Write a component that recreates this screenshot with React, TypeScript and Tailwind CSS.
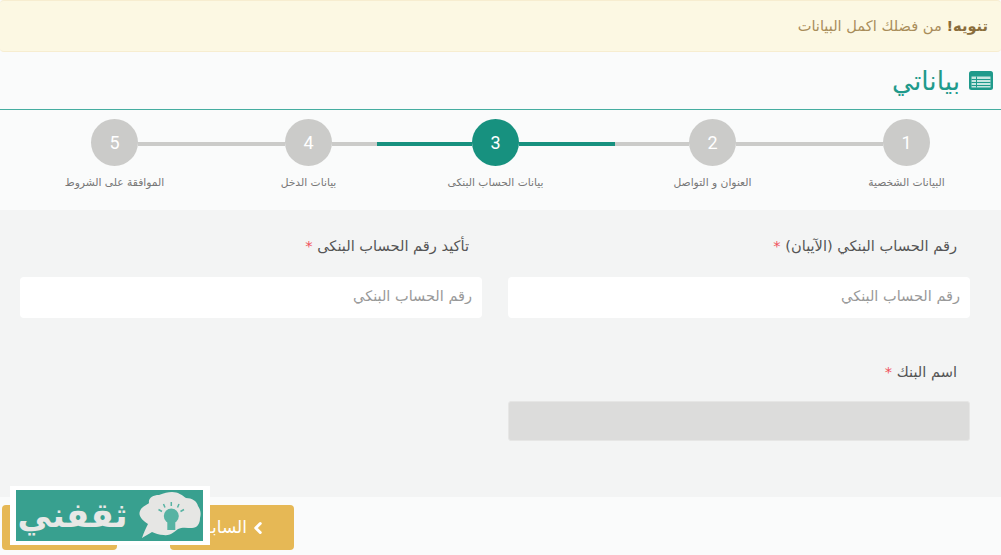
import { ChevronLeft } from "lucide-react";

const arabic = "font-['DejaVu_Sans','Noto_Sans',sans-serif]";

function Step({ num, label, active }: { num: number; label: string; active?: boolean }) {
  return (
    <div className="w-[47px] flex flex-col items-center shrink-0">
      <div className={`w-[47px] h-[47px] rounded-full flex items-center justify-center text-white text-[18px] font-['Roboto',sans-serif] ${active ? "bg-[#17917f]" : "bg-[#cbcbc9]"}`}>
        {num}
      </div>
      <span className="mt-[9px] text-[10.7px] leading-[16px] text-[#777] whitespace-nowrap">{label}</span>
    </div>
  );
}

function Line({ w, active }: { w: string; active?: boolean }) {
  return <div className={`${w} h-1 mt-[23px] shrink-0 ${active ? "bg-[#17917f]" : "bg-[#cbcbc9]"}`} />;
}

function Field({ label, placeholder }: { label: string; placeholder: string }) {
  return (
    <div>
      <label className="block pr-[13px] h-[20px] mb-[21px] text-[14.6px] leading-[20px] text-[#555]">
        {label} <span className="text-[#f0505a]">*</span>
      </label>
      <input
        placeholder={placeholder}
        className="w-full h-[41px] px-[10px] pb-[3px] bg-white rounded-[4px] text-[14.5px] placeholder:text-[#999] outline-none"
      />
    </div>
  );
}

function Logo() {
  return (
    <div className="absolute left-[10px] top-[486px] w-[200px] h-[59px] bg-white px-[7px] pt-[4px]">
      <div dir="rtl" className="w-[187px] h-[51px] bg-[#38a08f] flex items-center overflow-hidden">
        <svg width="66" height="51" viewBox="0 0 66 51" className="shrink-0">
          <path
            d="M5 48C7 42 9 38 11 34C5 30 1 26 3 21C5 16 10 15 12 13C11 8 16 5 22 5C27 3 31 2 35 2C41 2 45 5 49 8C55 8 60 11 61 16C64 20 64 25 63 28C63 34 60 38 55 38C50 38 45 37 41 39C36 43 32 46 27 45C22 45 18 43 15 42C12 44 8 46 5 48Z"
            fill="#e6e6e4"
          />
          <circle cx="34.3" cy="26" r="7.5" fill="#57b3a3" />
          <path d="M30.3 31h8v9h-8z" fill="#57b3a3" />
          <path d="M34.3 12v4M26.5 14l1.5 3.5M42 14l-1.5 3.5M21.5 19.5l3.5 2M47 19.5l-3.5 2" stroke="#57b3a3" strokeWidth="1.5" />
        </svg>
        <span className="w-[121px] pr-[8px] text-center text-[#e8e8e6] text-[34px] leading-[51px] font-bold whitespace-nowrap">ثقفني</span>
      </div>
    </div>
  );
}

export default function App() {
  return (
    <div dir="rtl" className={`relative w-[1001px] h-[555px] overflow-hidden bg-[#fafbfb] ${arabic}`}>
      <div className="h-[52px] bg-[#fcf8e3] border-y border-[#f7edd0] rounded-[4px] pr-[13px] flex items-center text-[14.6px] text-[#a98d5a]">
        <span><b className="font-bold text-[#8a6d3b]">تنويه!</b> من فضلك اكمل البيانات</span>
      </div>

      <div className="h-[58px] border-b border-[#45ada0] pr-[8px] flex items-center gap-[9px] text-[#1f9a8b]">
        <svg width="24" height="19" viewBox="0 0 24 19" className="shrink-0">
          <rect width="24" height="19" rx="2.5" fill="#1f9a8b" />
          <path d="M2.5 5.5h19v11h-19z" fill="#c8e6e1" />
          <path d="M2.5 8.5h19M2.5 11.5h19M2.5 14.5h19M7.5 5.5v11" stroke="#1f9a8b" strokeWidth="1" />
        </svg>
        <h1 className="text-[26.4px] leading-[32px]">بياناتي</h1>
      </div>

      <div className="h-[100px] pt-[9px] pr-[71px] flex items-start">
        <Step num={1} label="البيانات الشخصية" />
        <Line w="w-[147px]" />
        <Step num={2} label="العنوان و التواصل" />
        <Line w="w-[74px]" />
        <Line w="w-[96px]" active />
        <Step num={3} label="بيانات الحساب البنكى" active />
        <Line w="w-[95px]" active />
        <Line w="w-[45px]" />
        <Step num={4} label="بيانات الدخل" />
        <Line w="w-[147px]" />
        <Step num={5} label="الموافقة على الشروط" />
      </div>

      <div className="h-[287px] bg-[#f3f4f4] pt-[26px] pr-[31px] pl-[20px]">
        <div className="grid grid-cols-2 gap-x-[26px]">
          <Field label="رقم الحساب البنكي (الآيبان)" placeholder="رقم الحساب البنكي" />
          <Field label="تأكيد رقم الحساب البنكى" placeholder="رقم الحساب البنكي" />
          <div className="mt-[44px]">
            <label className="block pr-[13px] h-[20px] mb-[19px] text-[14.6px] leading-[20px] text-[#555]">
              اسم البنك <span className="text-[#f0505a]">*</span>
            </label>
            <div className="h-[40px] bg-[#dcdcdb] border border-[#e6e6e5] rounded-[3px]" />
          </div>
        </div>
      </div>

      <div dir="ltr" className="flex pt-[8px] pl-[2px] gap-[53px]">
        <button className="w-[115px] h-[45px] bg-[#e6b855] rounded-[4px] text-white text-[17px]">التالي</button>
        <button dir="rtl" className="w-[124px] h-[45px] bg-[#e6b855] rounded-[4px] text-white text-[17px] flex items-center pr-[27px] gap-[2px]">
          <ChevronLeft size={18} strokeWidth={4} className="shrink-0" />
          <span>السابق</span>
        </button>
      </div>

      <Logo />
    </div>
  );
}
